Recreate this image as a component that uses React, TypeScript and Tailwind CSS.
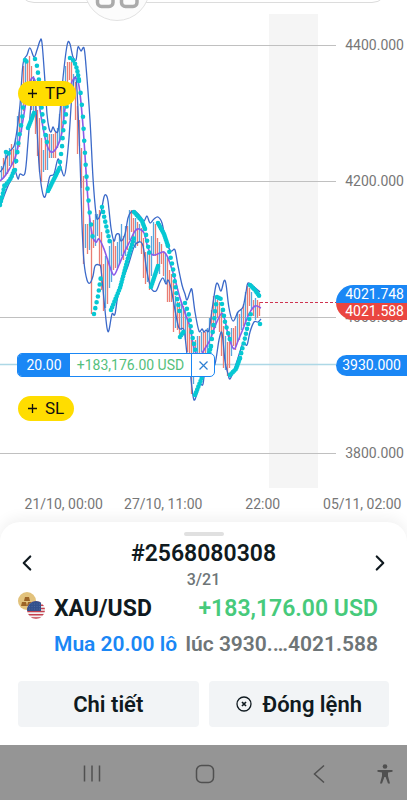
import { FC, memo } from "react";
import { ChevronLeft, ChevronRight } from "lucide-react";

const PRICE_LEVELS = ["4400.000", "4200.000", "4000.000", "3800.000"];
const TIME_LABELS = ["21/10, 00:00", "27/10, 11:00", "22:00", "05/11, 02:00"];

type Candle = [x: number, high: number, low: number, up: 0 | 1];

const CANDLES: Candle[] = [
  [1, 166, 180, 1], [3, 160, 176, 0], [5, 154, 172, 1], [7, 152, 168, 0], [9, 150, 166, 1],
  [11, 148, 163, 0], [13, 149, 166, 0], [15, 140, 158, 1], [17, 120, 150, 1], [19, 112, 145, 0],
  [21, 92, 128, 1], [23, 70, 105, 0], [25, 62, 96, 1], [27, 64, 88, 0], [29, 60, 84, 0],
  [31, 66, 104, 0], [33, 78, 112, 1], [35, 90, 132, 0], [37, 110, 152, 0], [39, 120, 166, 0],
  [41, 142, 182, 0], [43, 150, 170, 1], [45, 140, 166, 0], [47, 138, 164, 1], [49, 134, 158, 0],
  [51, 136, 156, 1], [53, 138, 154, 0], [55, 132, 152, 0], [57, 130, 148, 1], [59, 118, 140, 1],
  [61, 104, 130, 0], [63, 84, 118, 1], [65, 70, 100, 1], [67, 62, 92, 0], [69, 64, 76, 0],
  [71, 66, 82, 0], [73, 74, 98, 1], [75, 84, 118, 0], [77, 110, 150, 0], [79, 120, 140, 0],
  [81, 150, 188, 0], [83, 180, 262, 0], [85, 224, 244, 1], [87, 226, 248, 0], [89, 222, 250, 1],
  [91, 230, 312, 0], [93, 222, 244, 0], [95, 218, 240, 1], [97, 214, 236, 1], [99, 212, 264, 0],
  [101, 236, 286, 0], [103, 264, 305, 0], [105, 258, 308, 1], [107, 262, 302, 0], [109, 246, 284, 1],
  [111, 242, 276, 1], [113, 244, 270, 0], [115, 246, 266, 0], [117, 244, 264, 1], [119, 238, 258, 1],
  [121, 224, 256, 1], [123, 238, 258, 0], [125, 230, 252, 1], [127, 226, 244, 0], [129, 212, 240, 1],
  [131, 214, 230, 0], [133, 218, 240, 0], [135, 220, 242, 1], [137, 226, 246, 0], [139, 224, 240, 1],
  [141, 230, 250, 0], [143, 242, 272, 0], [145, 252, 284, 0], [147, 254, 280, 1], [149, 256, 286, 0],
  [151, 236, 270, 1], [153, 224, 256, 1], [155, 228, 254, 0], [157, 238, 266, 0], [159, 244, 268, 1],
  [161, 248, 264, 0], [163, 252, 274, 0], [165, 256, 278, 1], [167, 262, 296, 0], [169, 270, 302, 0],
  [171, 276, 300, 0], [173, 286, 328, 0], [175, 296, 322, 1], [177, 304, 330, 0], [179, 306, 332, 0],
  [181, 304, 326, 1], [183, 308, 328, 0], [185, 312, 340, 1], [187, 318, 350, 0], [189, 330, 366, 0],
  [191, 344, 388, 0], [193, 346, 384, 1], [195, 342, 374, 0], [197, 340, 362, 1], [199, 336, 358, 0],
  [201, 334, 352, 1], [203, 336, 358, 0], [205, 332, 352, 0], [207, 330, 350, 1], [209, 322, 346, 1],
  [211, 310, 338, 0], [213, 298, 326, 0], [215, 300, 322, 1], [217, 300, 318, 0], [219, 304, 330, 0],
  [221, 312, 352, 0], [223, 326, 362, 0], [225, 338, 370, 1], [227, 346, 374, 0], [229, 334, 364, 0],
  [231, 330, 350, 1], [233, 332, 346, 0], [235, 326, 348, 0], [237, 314, 338, 1], [239, 318, 334, 0],
  [241, 310, 330, 1], [243, 306, 324, 0], [245, 296, 320, 1], [247, 286, 310, 0], [249, 290, 306, 0],
  [251, 296, 308, 1], [253, 300, 312, 0], [255, 300, 314, 1], [257, 304, 318, 0], [259, 302, 314, 0],
];

const UPPER_BAND =
  "0,172 3,168 6,158 10,151 14,146 17,130 20,105 23,64 27,55 30,48 34,57 37,50 40,41 42,43 45,82 47,114 49,128 51,132 53,127 55,131 58,131 60,112 63,78 66,52 68,42 70,44 73,57 76,60 78,47 81,51 84,48 86,66 90,120 93,178 96,214 98,219 101,212 104,197 106,195 108,201 111,228 114,241 116,235 119,234 121,241 125,234 128,218 131,212 135,211 140,216 144,221 147,216 150,223 154,219 158,217 162,223 166,242 170,250 172,251 175,250 178,266 182,285 185,294 187,300 190,292 192,290 195,312 199,331 202,329 204,332 206,330 209,330 213,303 216,285 218,284 221,291 224,281 226,284 229,308 233,321 238,312 243,307 246,292 248,283 253,286 260,292";

const LOWER_BAND =
  "0,207 4,196 8,186 12,178 15,171 18,179 20,174 25,173 28,142 31,104 34,80 36,108 39,164 42,190 45,197 48,184 50,176 54,174 58,159 61,168 64,176 66,168 69,138 72,94 75,77 77,90 80,160 82,224 84,262 87,280 90,283 93,276 95,266 99,265 101,269 104,300 107,328 109,330 112,314 115,314 119,290 128,266 134,247 139,242 143,246 147,272 151,288 156,291 160,282 163,278 166,284 168,280 171,288 175,310 179,328 184,330 187,354 190,370 192,388 194,400 197,394 200,384 203,384 206,362 210,370 215,364 219,340 222,333 225,361 228,374 230,379 234,370 238,358 243,343 247,345 250,332 254,322 258,322 261,319";

const MOVING_AVERAGE =
  "0,181 5,176 10,168 15,158 19,142 23,120 28,90 32,78 36,84 41,116 46,142 51,152 57,147 62,132 66,102 71,84 75,78 79,86 83,126 88,200 92,234 96,242 99,239 104,249 110,267 114,275 119,265 124,253 130,241 135,231 139,229 144,233 148,248 153,255 160,253 164,252 168,258 174,276 180,298 185,313 190,327 194,348 199,356 204,350 210,340 216,324 221,314 224,317 229,338 234,349 238,341 243,329 249,314 255,306 261,308";

interface Trail {
  points: string;
  step: number;
}

const SAR_TRAILS: Trail[] = [
  { points: "0,205 3,193 5,182", step: 4 },
  { points: "6,152 10,154", step: 3 },
  { points: "5,186 11,178 15,168", step: 3 },
  { points: "15,170 17,155 19,138 22,120 23,108 24,94", step: 9 },
  { points: "25,60 27,62", step: 2 },
  { points: "28,128 34,113", step: 2 },
  { points: "35,59 37,66 38,73 40,88 42,112 45,132 48,148", step: 7 },
  { points: "48,191 60,167", step: 2 },
  { points: "60,162 62,147 63,132 66,114 68,90", step: 8 },
  { points: "70,58 74,61 77,69 79,80", step: 4 },
  { points: "79,81 81,96 83,117 84,137 86,170 88,195 90,216 93,240", step: 12 },
  { points: "94,314 98,296 101,276", step: 6 },
  { points: "102,207 106,225 110,243", step: 5 },
  { points: "111,310 120,288 128,258 134,238", step: 3 },
  { points: "134,212 142,221 145,229", step: 2 },
  { points: "145,229 147,240 150,257", step: 6 },
  { points: "151,287 158,266", step: 2 },
  { points: "158,223 164,234 168,246", step: 2 },
  { points: "168,246 173,268 177,298 180,314", step: 6 },
  { points: "180,337 184,331", step: 2 },
  { points: "185,303 189,315 192,335 196,353", step: 6 },
  { points: "195,395 201,380 206,366 211,346", step: 3 },
  { points: "211,346 213,330 215,312 217,298", step: 7 },
  { points: "217,297 221,299", step: 2 },
  { points: "222,304 225,322 230,340", step: 6 },
  { points: "230,375 236,369 240,358", step: 2 },
  { points: "240,358 245,338 249,320 252,310", step: 5 },
  { points: "250,285 255,290 260,297", step: 2 },
  { points: "260,324 261,324", step: 2 },
];

// Catmull-Rom through the given points
function smooth(points: string) {
  const p = points.split(" ").map((pair) => pair.split(",").map(Number));
  let d = `M${p[0][0]} ${p[0][1]}`;
  for (let i = 0; i < p.length - 1; i++) {
    const a = p[Math.max(i - 1, 0)];
    const b = p[i];
    const c = p[i + 1];
    const e = p[Math.min(i + 2, p.length - 1)];
    d += `C${b[0] + (c[0] - a[0]) / 6} ${b[1] + (c[1] - a[1]) / 6} ${c[0] - (e[0] - b[0]) / 6} ${c[1] - (e[1] - b[1]) / 6} ${c[0]} ${c[1]}`;
  }
  return d;
}

const PriceSeries: FC = memo(() => (
  <svg
    className="absolute top-0 left-0"
    width={336}
    height={490}
    viewBox="0 0 336 490"
    fill="none"
    strokeLinejoin="round"
    aria-hidden="true"
  >
    <path d="M0 364.5H336" stroke="#add8e6" strokeWidth={1.4} />
    {CANDLES.map(([x, high, low, up], i) => (
      <path
        key={x}
        d={`M${x + 0.5} ${high - (i % 3) * 2}V${low + (i % 4) * 2}`}
        stroke={up ? "#58a6df" : "#ea7d73"}
        strokeWidth={1.3}
      />
    ))}
    <path d={smooth(UPPER_BAND)} stroke="#3b69c9" strokeWidth={1.3} />
    <path d={smooth(LOWER_BAND)} stroke="#3b69c9" strokeWidth={1.3} />
    <path d={smooth(MOVING_AVERAGE)} stroke="#8b5be8" strokeWidth={1.6} />
    <g stroke="#06c8d3" strokeWidth={4.6} strokeLinecap="round">
      {SAR_TRAILS.map(({ points, step }) => (
        <polyline key={points} points={points} strokeDasharray={`0 ${step}`} />
      ))}
    </g>
    <path d="M260 302.500H336" stroke="#cf3350" strokeDasharray="3 2" />
  </svg>
));

PriceSeries.displayName = "PriceSeries";

const PairIcon: FC = () => (
  <svg width={28} height={28} viewBox="0 0 28 28" aria-hidden="true">
    <circle cx="9" cy="9" r="9" fill="#e2c27c" />
    <path d="M7 5h4l1 4H6zM4 10h4l1 4H3zM10 10h4l1 4H9z" fill="#9c6427" />
    <clipPath id="flag">
      <circle cx="18" cy="18" r="9" />
    </clipPath>
    <g clipPath="url(#flag)">
      <path d="M9 9h18v18H9z" fill="#f3f0f1" />
      <path
        d="M9 10h18M9 13.200h18M9 16.400h18M9 19.600h18M9 22.800h18M9 26h18"
        stroke="#c5414f"
        strokeWidth="1.500"
      />
      <path d="M9 9h14v10H9z" fill="#33508c" />
      <path d="M11 12h11M11 14.500h11M11 17h11" stroke="#5672a8" strokeWidth=".7" strokeDasharray="1 1.500" />
    </g>
  </svg>
);

const TopBar: FC = () => (
  <div className="absolute inset-x-0 top-0 h-6 overflow-hidden">
    <div className="absolute -top-9 left-[18px] right-[19px] h-[39px] rounded-2xl border border-[#dcdcdc]" />
    <svg className="absolute top-0 left-[84px]" width={66} height={24} viewBox="0 0 66 24" fill="none" aria-hidden="true">
      <circle cx="33" cy="-12" r="32.500" fill="#fcfcfc" stroke="#e2e2e2" />
      <rect x="13.500" y="-9" width="15.500" height="15.500" rx="4" stroke="#ababab" strokeWidth="3.500" />
      <rect x="37.500" y="-9" width="15.500" height="15.500" rx="4" stroke="#ababab" strokeWidth="3.500" />
    </svg>
  </div>
);

const PlusGlyph: FC = () => (
  <svg width={9} height={9} viewBox="0 0 9 9" stroke="currentColor" strokeWidth={1.3} aria-hidden="true">
    <path d="M4.500 0v9M0 4.500h9" />
  </svg>
);

const Chart: FC = () => (
  <section className="relative flex flex-col overflow-hidden bg-white pb-2">
    <div className="relative h-[490px] pt-[35px]">
      <div className="absolute top-[14px] bottom-[2px] left-[66%] w-[49px] bg-[#f5f5f5]" />
      <ul className="relative flex flex-col gap-[116px]">
        {PRICE_LEVELS.map((price) => (
          <li key={price} className="flex h-5 items-center">
            <span className="h-px flex-1 bg-[#c0c0c0]" />
            <span className="w-[71px] pr-[3px] text-right text-sm text-[#777777]">{price}</span>
          </li>
        ))}
      </ul>
      <PriceSeries />

      {/* Quotes on the price axis */}
      <div className="absolute top-[285px] right-0 w-[71px] overflow-hidden rounded-l-[18px] text-right text-sm text-white">
        <p className="bg-[#1a87f5] pr-[3px] leading-[18px]">4021.748</p>
        <p className="bg-[#ea4640] pr-[3px] leading-[17px]">4021.588</p>
      </div>
      <p className="absolute top-[355px] right-0 w-[71px] rounded-l-full bg-[#1a87f5] pr-[6px] text-right text-sm leading-[21px] text-white">
        3930.000
      </p>

      {/* Order controls */}
      <button type="button" className="absolute top-[81px] left-[18px] flex h-[25px] w-[58px] items-center justify-center gap-2 rounded-full bg-[#ffdd00] text-[17px] text-[#111111]">
        <PlusGlyph />
        TP
      </button>
      <div className="absolute top-[353px] left-[17px] flex h-6 items-stretch overflow-hidden rounded-[5px] border border-[#1a87f5] bg-white text-sm">
        <span className="flex w-[52px] items-center justify-center bg-[#1a87f5] text-white">20.00</span>
        <span className="flex w-[121px] items-center justify-center text-[#54c07c]">+183,176.00 USD</span>
        <button type="button" aria-label="Close order" className="flex w-[23px] items-center justify-center border-l border-[#1a87f5]">
          <svg width={9} height={9} viewBox="0 0 9 9" stroke="#2d7fd2" strokeWidth={1.2}>
            <path d="M.5.5l8 8M8.500.5l-8 8" />
          </svg>
        </button>
      </div>
      <button type="button" className="absolute top-[396px] left-[18px] flex h-[25px] w-14 items-center justify-center gap-2 rounded-full bg-[#ffdd00] text-[17px] text-[#111111]">
        <PlusGlyph />
        SL
      </button>
    </div>
    <div className="-mr-[5px] ml-[14px] grid h-6 grid-cols-4 items-end text-center text-sm leading-5 whitespace-nowrap text-[#777777]">
      {TIME_LABELS.map((label) => (
        <span key={label}>{label}</span>
      ))}
    </div>
    <TopBar />
  </section>
);

const OrderSheet: FC = () => (
  <section className="relative rounded-t-[20px] bg-white px-[18px] pt-[10px] pb-[18px] shadow-[0_-4px_14px_rgba(0,0,0,0.06)]">
    <div className="mx-auto h-1 w-10 rounded-full bg-[#e0e0e0]" />
    <div className="flex items-center justify-between pt-1">
      <button type="button" aria-label="Previous order" className="-ml-1 pb-[6px] text-[#101a20]">
        <ChevronLeft size={26} strokeWidth={2} />
      </button>
      <div className="text-center">
        <h1 className="text-[23px] leading-7 font-semibold text-[#101a20]">#2568080308</h1>
        <p className="text-base leading-6 font-medium text-[#6e7577]">3/21</p>
      </div>
      <button type="button" aria-label="Next order" className="-mr-1 pb-[6px] text-[#101a20]">
        <ChevronRight size={26} strokeWidth={2} />
      </button>
    </div>
    <div className="flex gap-2 pr-[11px]">
      <PairIcon />
      <div className="flex-1 whitespace-nowrap">
        <div className="flex h-[34px] items-center justify-between text-[23px]">
          <h2 className="font-bold text-[#101a20]">XAU/USD</h2>
          <p className="font-semibold text-[#47ca7b]">+183,176.00 USD</p>
        </div>
        <p className="flex h-[38px] items-center justify-between text-[21px] font-semibold">
          <span className="text-[#1a87f5]">Mua 20.00 lô</span>
          <span className="text-[#6e7577]">lúc 3930.…4021.588</span>
        </p>
      </div>
    </div>
    <div className="flex gap-[10px] pt-[17px]">
      <button type="button" className="h-[46px] flex-1 rounded-[4px] bg-[#f2f4f6] text-[22px] font-semibold text-[#101a20]">
        Chi tiết
      </button>
      <button type="button" className="flex h-[46px] flex-1 items-center justify-center gap-[11px] rounded-[4px] bg-[#f2f4f6] text-[22px] font-semibold text-[#101a20]">
        <svg width={16} height={16} viewBox="0 0 16 16" fill="none" stroke="currentColor" aria-hidden="true">
          <circle cx="8" cy="8" r="7" strokeWidth="1.300" />
          <path d="M6 6l4 4M10 6l-4 4" strokeWidth="1.700" />
        </svg>
        Đóng lệnh
      </button>
    </div>
  </section>
);

const SystemNav: FC = () => (
  <nav className="relative flex h-[55px] items-center bg-[#959595] pt-[3px] text-[#505050]">
    <div className="grid flex-1 grid-cols-3 pl-[35px]">
      <button type="button" aria-label="Recent apps" className="flex justify-center">
        <svg width={18} height={20} viewBox="0 0 18 20" fill="none" stroke="currentColor" strokeWidth={1.5}>
          <path d="M1.500 1.500v16M9 1.500v16M16.500 1.500v16" />
        </svg>
      </button>
      <button type="button" aria-label="Home" className="flex justify-center">
        <svg width={20} height={20} viewBox="0 0 20 20" fill="none" stroke="currentColor" strokeWidth={1.5}>
          <rect x="1.500" y="1.500" width="17" height="17" rx="5" />
        </svg>
      </button>
      <button type="button" aria-label="Back" className="flex justify-center">
        <svg width={12} height={20} viewBox="0 0 12 20" fill="none" stroke="currentColor" strokeWidth={1.500}>
          <path d="M11 1.500L1.500 10l9.500 8.500" />
        </svg>
      </button>
    </div>
    <button type="button" aria-label="Accessibility" className="mr-[13px]">
      <svg width={18} height={20} viewBox="0 0 18 20" fill="currentColor">
        <circle cx="9" cy="2.500" r="2.300" />
        <path d="M1.500 6h15v1.800l-4.500.7v3.500l2 7.500h-2L9.600 13H8.400L6 19.500H4l2-7.500V8.500l-4.500-.7z" />
      </svg>
    </button>
  </nav>
);

export default function App() {
  return (
    <main className="min-h-screen bg-white font-[Roboto,sans-serif]">
      <Chart />
      <OrderSheet />
      <SystemNav />
    </main>
  );
}
